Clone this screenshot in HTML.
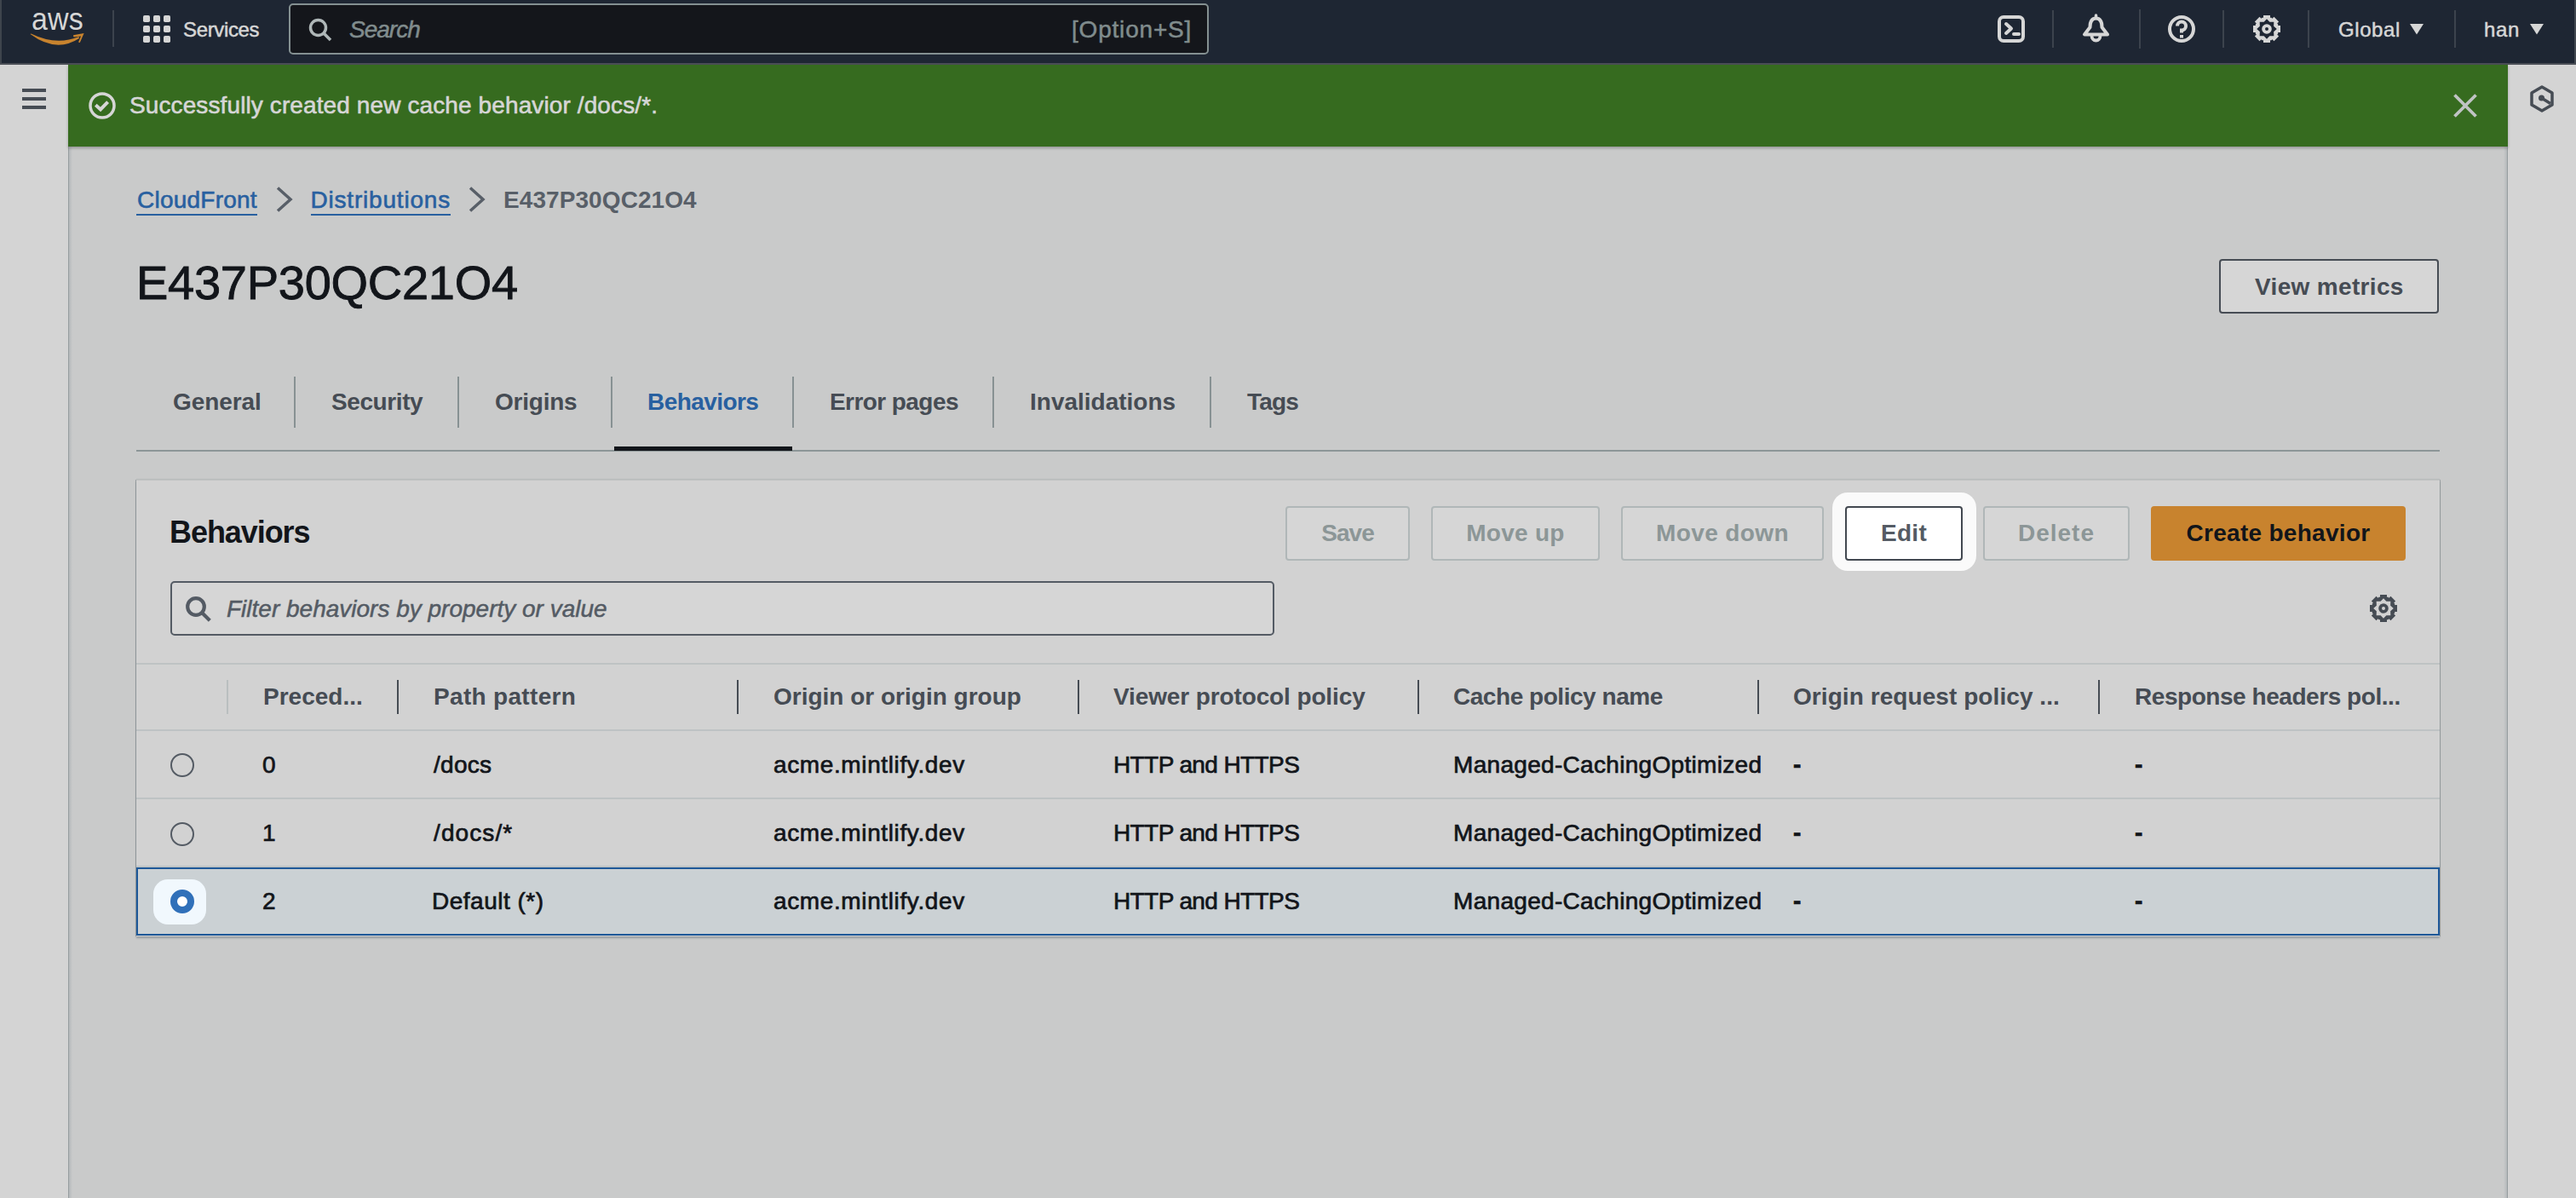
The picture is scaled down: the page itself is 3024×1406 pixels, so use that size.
<!DOCTYPE html>
<html><head><meta charset="utf-8">
<style>
html,body{margin:0;padding:0}html{background:rgb(201,202,202)}
body{width:3024px;height:1406px;overflow:hidden;position:relative;background:rgb(201,202,202);font-family:"Liberation Sans",sans-serif;}
.a{position:absolute;white-space:nowrap;line-height:1}
svg{position:absolute;overflow:visible}
#nav{position:absolute;left:0;top:0;width:3024px;height:74px;background:rgb(30,38,51);border-bottom:2px solid rgb(74,78,86)}
.nt{color:rgb(214,214,214);font-size:24px;-webkit-text-stroke-width:0.5px}
.nd{position:absolute;width:2px;background:rgb(60,67,77)}
#side{position:absolute;left:0;top:76px;width:80px;height:1330px;background:rgb(212,212,212)}
#sideb{position:absolute;left:80px;top:76px;width:5px;height:1330px;background:linear-gradient(to right,rgb(150,157,160) 0,rgb(150,157,160) 1px,rgb(180,184,186) 1px,rgba(201,202,202,0) 5px)}
#rp{position:absolute;left:2944px;top:76px;width:80px;height:1330px;background:rgb(212,212,212)}
#rpb{position:absolute;left:2939px;top:76px;width:5px;height:1330px;background:linear-gradient(to left,rgb(150,157,160) 0,rgb(150,157,160) 1px,rgb(180,184,186) 1px,rgba(201,202,202,0) 5px)}
#flash{position:absolute;left:80px;top:76px;width:2864px;height:96px;background:rgb(54,107,31);box-shadow:0 2px 3px rgba(0,0,0,0.25)}
.ft{color:rgb(214,214,214);font-size:28px;-webkit-text-stroke-width:0.6px}

.tb{top:458px;font-size:28px;font-weight:bold;color:rgb(70,76,84);letter-spacing:-0.4px}
.tdv{position:absolute;top:442px;width:2px;height:60px;background:rgb(135,145,147)}
#cont{position:absolute;left:160px;top:563px;width:2704px;height:535px;background:rgb(210,210,210);box-shadow:0 2px 2px rgba(0,20,30,0.25),1px 0 0 rgb(160,166,168),-1px 0 0 rgb(155,161,164),0 -1px 1px rgba(0,20,30,0.08);border-top:1px solid rgb(192,195,195)}
.btn{position:absolute;top:594px;height:60px;border:2px solid rgb(176,183,184);border-radius:4px;background:rgb(214,214,214);font-size:28px;font-weight:bold;line-height:60px;text-align:center;color:rgb(140,150,151);white-space:nowrap}
.hl{position:absolute;left:160px;width:2704px;height:2px;background:rgb(190,195,196)}
.cdv{position:absolute;top:798px;width:2px;height:40px;background:rgb(70,76,84)}
.th{top:804px;font-size:28px;font-weight:bold;color:rgb(70,76,84)}
.td{font-size:28px;color:rgb(18,21,26);-webkit-text-stroke-width:0.7px}
.radio{position:absolute;left:200px;width:24px;height:24px;border:2px solid rgb(84,91,100);border-radius:50%}
#selrow{position:absolute;left:160px;top:1018px;width:2700px;height:76px;border:2px solid rgb(30,88,152);background:rgb(203,209,212)}
</style></head>
<body>
<div id="nav"><div style="position:absolute;left:0;top:0;width:2px;height:74px;background:rgb(62,68,76)"></div><div style="position:absolute;left:3022px;top:0;width:2px;height:74px;background:rgb(66,72,80)"></div>
  <!-- aws logo -->
  <div class="a" style="left:37px;top:5.5px;font-size:34px;color:rgb(214,214,214);letter-spacing:0.2px;transform:scaleY(1.1);transform-origin:0 29px">aws</div>
  <svg style="left:30px;top:30px" width="75" height="30" viewBox="0 0 75 30"><path d="M5.5 10 Q36 32.5 63 15 L62.5 13 Q36 24 6.5 9.5 Z" fill="rgb(200,131,46)"/><path d="M56 11.3 L68.6 9 L63.8 20 L62 19.6 L65 12.6 L56.4 13.4 Z" fill="rgb(200,131,46)"/></svg>
  <div class="nd" style="left:132px;top:12px;height:43px"></div>
  <!-- grid -->
  <svg style="left:168px;top:18px" width="32" height="32" viewBox="0 0 32 32" fill="rgb(214,214,214)"><rect x="0" y="0" width="8" height="8" rx="1.8"/><rect x="12" y="0" width="8" height="8" rx="1.8"/><rect x="24" y="0" width="8" height="8" rx="1.8"/><rect x="0" y="12" width="8" height="8" rx="1.8"/><rect x="12" y="12" width="8" height="8" rx="1.8"/><rect x="24" y="12" width="8" height="8" rx="1.8"/><rect x="0" y="24" width="8" height="8" rx="1.8"/><rect x="12" y="24" width="8" height="8" rx="1.8"/><rect x="24" y="24" width="8" height="8" rx="1.8"/></svg>
  <div class="a nt" style="left:215px;top:23px;letter-spacing:-0.36px">Services</div>
  <!-- search -->
  <div style="position:absolute;left:339px;top:4px;width:1076px;height:56px;border:2px solid rgb(132,144,145);border-radius:5px;background:rgb(20,22,27)"></div>
  <svg style="left:362px;top:21px" width="28" height="28" viewBox="0 0 28 28"><circle cx="11.5" cy="11.5" r="9" stroke="rgb(175,183,184)" stroke-width="3.5" fill="none"/><path d="M18 18 L26 26" stroke="rgb(175,183,184)" stroke-width="3.5"/></svg>
  <div class="a" style="left:410px;top:21px;font-size:28px;font-style:italic;color:rgb(128,140,141);letter-spacing:-1px;-webkit-text-stroke-width:0.5px">Search</div>
  <div class="a" style="left:1258px;top:21px;font-size:28px;color:rgb(128,140,141);letter-spacing:0.8px;-webkit-text-stroke-width:0.5px">[Option+S]</div>
  <!-- right icons -->
  <svg style="left:2345px;top:18px" width="32" height="32" viewBox="0 0 32 32"><rect x="2" y="2" width="28" height="28" rx="5" stroke="rgb(214,214,214)" stroke-width="4" fill="none"/><path d="M10 10 L16 15.5 L10 21" stroke="rgb(214,214,214)" stroke-width="4" fill="none" stroke-linecap="round" stroke-linejoin="round"/><path d="M19 22 L25 22" stroke="rgb(214,214,214)" stroke-width="4" stroke-linecap="round"/></svg>
  <div class="nd" style="left:2409px;top:12px;height:44px"></div>
  <svg style="left:2444px;top:17px" width="34" height="34" viewBox="0 0 34 34"><path d="M16.5 1 L16.5 4" stroke="rgb(214,214,214)" stroke-width="3.5" stroke-linecap="round"/><path d="M16.5 4.5 C10.5 4.5 9.5 10 9.5 15 L3 23.5 L30 23.5 L23.5 15 C23.5 10 22.5 4.5 16.5 4.5 Z" stroke="rgb(214,214,214)" stroke-width="4" fill="none" stroke-linejoin="round"/><path d="M11.5 25 A5 5.5 0 0 0 21.5 25" stroke="rgb(214,214,214)" stroke-width="3.8" fill="none"/></svg>
  <div class="nd" style="left:2511px;top:11px;height:46px"></div>
  <svg style="left:2545px;top:18px" width="32" height="32" viewBox="0 0 32 32"><circle cx="16" cy="16" r="14" stroke="rgb(214,214,214)" stroke-width="4" fill="none"/><path d="M11 12.5 A5 5 0 1 1 16 17.5 L16 20.5" stroke="rgb(214,214,214)" stroke-width="4" fill="none"/><rect x="14" y="23" width="4" height="3.5" fill="rgb(214,214,214)"/></svg>
  <div class="nd" style="left:2609px;top:12px;height:44px"></div>
  <svg style="left:2645px;top:18px" width="32" height="32" viewBox="0 0 32 32"><path d="M10.53 2.80 L12.00 2.80 L12.00 0.00 L20.00 0.00 L20.00 2.80 L21.47 2.80 L21.47 2.80 L22.51 3.84 L24.49 1.86 L30.14 7.51 L28.16 9.49 L29.20 10.53 L29.20 10.53 L29.20 12.00 L32.00 12.00 L32.00 20.00 L29.20 20.00 L29.20 21.47 L29.20 21.47 L28.16 22.51 L30.14 24.49 L24.49 30.14 L22.51 28.16 L21.47 29.20 L21.47 29.20 L20.00 29.20 L20.00 32.00 L12.00 32.00 L12.00 29.20 L10.53 29.20 L10.53 29.20 L9.49 28.16 L7.51 30.14 L1.86 24.49 L3.84 22.51 L2.80 21.47 L2.80 21.47 L2.80 20.00 L0.00 20.00 L-0.00 12.00 L2.80 12.00 L2.80 10.53 L2.80 10.53 L3.84 9.49 L1.86 7.51 L7.51 1.86 L9.49 3.84 L10.53 2.80 Z M16.00 4.20 L19.37 7.87 L24.34 7.66 L24.13 12.63 L27.80 16.00 L24.13 19.37 L24.34 24.34 L19.37 24.13 L16.00 27.80 L12.63 24.13 L7.66 24.34 L7.87 19.37 L4.20 16.00 L7.87 12.63 L7.66 7.66 L12.63 7.87 Z" fill="rgb(214,214,214)" fill-rule="evenodd"/><circle cx="16" cy="16" r="3.9" stroke="rgb(214,214,214)" stroke-width="3.8" fill="none"/></svg>
  <div class="nd" style="left:2709px;top:12px;height:44px"></div>
  <div class="a nt" style="left:2745px;top:23px;letter-spacing:0.58px">Global</div>
  <svg style="left:2829px;top:28px" width="16" height="13" viewBox="0 0 16 13"><path d="M0 0 H16 L8 12.5 Z" fill="rgb(214,214,214)"/></svg>
  <div class="nd" style="left:2881px;top:12px;height:44px"></div>
  <div class="a nt" style="left:2916px;top:23px;letter-spacing:0.6px">han</div>
  <svg style="left:2970px;top:28px" width="16" height="13" viewBox="0 0 16 13"><path d="M0 0 H16 L8 12.5 Z" fill="rgb(214,214,214)"/></svg>
</div>

<div id="side"></div>
<div id="sideb"></div>
<svg style="left:26px;top:104px" width="28" height="24" viewBox="0 0 28 24" fill="rgb(70,76,84)"><rect x="0" y="0" width="28" height="4"/><rect x="0" y="10" width="28" height="4"/><rect x="0" y="20" width="28" height="4"/></svg>
<div id="rp"></div>
<div id="rpb"></div>
<svg style="left:2969px;top:100px" width="30" height="32" viewBox="0 0 30 32"><path d="M15 2 L27 9 L27 23 L15 30 L3 23 L3 9 Z" stroke="rgb(70,76,84)" stroke-width="3.5" fill="none" stroke-linejoin="round"/><circle cx="14.5" cy="15" r="3.5" fill="rgb(70,76,84)"/><path d="M14.5 15 L25 21.5" stroke="rgb(70,76,84)" stroke-width="3.5"/></svg>

<div id="flash">
  <svg style="left:24px;top:32px" width="32" height="32" viewBox="0 0 32 32"><circle cx="16" cy="16" r="14" stroke="rgb(214,214,214)" stroke-width="3.5" fill="none"/><path d="M8.3 15.3 L14 20.4 L22.6 11.7" stroke="rgb(214,214,214)" stroke-width="4" fill="none"/></svg>
  <div class="a ft" style="left:72px;top:34px;letter-spacing:0.11px">Successfully created new cache behavior /docs/*.</div>
  <svg style="left:2801px;top:35px" width="26" height="26" viewBox="0 0 26 26"><path d="M0.5 0.5 L25.5 25.5 M25.5 0.5 L0.5 25.5" stroke="rgb(192,195,196)" stroke-width="3.8"/></svg>
</div>


<!-- breadcrumbs -->
<div class="a" style="left:161px;top:220.6px;font-size:28px;color:rgb(40,96,160);letter-spacing:0.23px;-webkit-text-stroke-width:0.6px">CloudFront</div>
<div style="position:absolute;left:160px;top:251px;width:142px;height:2px;background:rgb(40,96,160)"></div>
<svg style="left:324px;top:219px" width="20" height="30" viewBox="0 0 20 30"><path d="M2 1.5 L17 15 L2 28.5" stroke="rgb(88,95,104)" stroke-width="3.5" fill="none"/></svg>
<div class="a" style="left:364.5px;top:220.6px;font-size:28px;color:rgb(40,96,160);letter-spacing:0.8px;-webkit-text-stroke-width:0.6px">Distributions</div>
<div style="position:absolute;left:365px;top:251px;width:164px;height:2px;background:rgb(40,96,160)"></div>
<svg style="left:550px;top:219px" width="20" height="30" viewBox="0 0 20 30"><path d="M2 1.5 L17 15 L2 28.5" stroke="rgb(88,95,104)" stroke-width="3.5" fill="none"/></svg>
<div class="a" style="left:591px;top:220.6px;font-size:28px;font-weight:bold;color:rgb(88,95,104);letter-spacing:0.08px">E437P30QC21O4</div>

<!-- heading -->
<div class="a" style="left:160px;top:304px;font-size:56px;color:rgb(18,21,26);letter-spacing:-0.27px;-webkit-text-stroke:0.9px rgb(18,21,26)">E437P30QC21O4</div>

<!-- view metrics -->
<div style="position:absolute;left:2605px;top:304px;width:254px;height:60px;border:2px solid rgb(70,76,84);border-radius:4px;background:rgb(214,214,214)"></div>
<div class="a" style="left:2647px;top:322.8px;font-size:28px;font-weight:bold;color:rgb(70,76,84);letter-spacing:0.34px">View metrics</div>

<!-- tabs -->
<div style="position:absolute;left:160px;top:528px;width:2704px;height:2px;background:rgb(140,150,151)"></div>
<div style="position:absolute;left:721px;top:524px;width:209px;height:5px;background:rgb(18,21,26)"></div>
<div class="a tb" style="left:203px;letter-spacing:-0.08px">General</div>
<div class="tdv" style="left:345px"></div>
<div class="a tb" style="left:389px">Security</div>
<div class="tdv" style="left:537px"></div>
<div class="a tb" style="left:581px;letter-spacing:-0.23px">Origins</div>
<div class="tdv" style="left:717px"></div>
<div class="a tb" style="left:760px;color:rgb(40,96,160);letter-spacing:-0.56px">Behaviors</div>
<div class="tdv" style="left:930px"></div>
<div class="a tb" style="left:974px;letter-spacing:-0.57px">Error pages</div>
<div class="tdv" style="left:1165px"></div>
<div class="a tb" style="left:1209px;letter-spacing:0px">Invalidations</div>
<div class="tdv" style="left:1420px"></div>
<div class="a tb" style="left:1464px;letter-spacing:-0.83px">Tags</div>

<!-- container -->
<div id="cont"></div>
<div class="a" style="left:199px;top:606.5px;font-size:36px;font-weight:bold;color:rgb(18,21,26);letter-spacing:-1.07px">Behaviors</div>

<div class="btn dis" style="left:1509px;width:142px;letter-spacing:-0.97px">Save</div>
<div class="btn dis" style="left:1680px;width:194px;letter-spacing:0.28px">Move up</div>
<div class="btn dis" style="left:1903px;width:234px;letter-spacing:0.4px">Move down</div>
<div style="position:absolute;left:2151px;top:578px;width:169px;height:92px;border-radius:18px;background:rgb(250,250,250)"></div>
<div class="btn" style="left:2166px;width:134px;background:#fff;border-color:rgb(66,72,80);color:rgb(84,91,100);letter-spacing:0.33px">Edit</div>
<div class="btn dis" style="left:2328px;width:168px;letter-spacing:0.98px">Delete</div>
<div class="btn" style="left:2525px;width:299px;height:64px;top:594px;border:none;line-height:64px;background:rgb(200,131,46);color:rgb(18,21,26);letter-spacing:0.29px">Create behavior</div>

<!-- filter -->
<div style="position:absolute;left:200px;top:682px;width:1292px;height:60px;border:2px solid rgb(84,91,100);border-radius:5px;background:rgb(214,214,214)"></div>
<svg style="left:217px;top:700px" width="32" height="32" viewBox="0 0 32 32"><circle cx="13" cy="12" r="9.8" stroke="rgb(84,91,100)" stroke-width="4.2" fill="none"/><path d="M20 19 L29.3 28.3" stroke="rgb(84,91,100)" stroke-width="4.2"/></svg>
<div class="a" style="left:266px;top:701px;font-size:28px;font-style:italic;color:rgb(84,91,100);-webkit-text-stroke-width:0.5px">Filter behaviors by property or value</div>
<svg style="left:2782px;top:698px" width="32" height="32" viewBox="0 0 32 32"><path d="M10.53 2.80 L12.00 2.80 L12.00 0.00 L20.00 0.00 L20.00 2.80 L21.47 2.80 L21.47 2.80 L22.51 3.84 L24.49 1.86 L30.14 7.51 L28.16 9.49 L29.20 10.53 L29.20 10.53 L29.20 12.00 L32.00 12.00 L32.00 20.00 L29.20 20.00 L29.20 21.47 L29.20 21.47 L28.16 22.51 L30.14 24.49 L24.49 30.14 L22.51 28.16 L21.47 29.20 L21.47 29.20 L20.00 29.20 L20.00 32.00 L12.00 32.00 L12.00 29.20 L10.53 29.20 L10.53 29.20 L9.49 28.16 L7.51 30.14 L1.86 24.49 L3.84 22.51 L2.80 21.47 L2.80 21.47 L2.80 20.00 L0.00 20.00 L-0.00 12.00 L2.80 12.00 L2.80 10.53 L2.80 10.53 L3.84 9.49 L1.86 7.51 L7.51 1.86 L9.49 3.84 L10.53 2.80 Z M16.00 4.20 L19.37 7.87 L24.34 7.66 L24.13 12.63 L27.80 16.00 L24.13 19.37 L24.34 24.34 L19.37 24.13 L16.00 27.80 L12.63 24.13 L7.66 24.34 L7.87 19.37 L4.20 16.00 L7.87 12.63 L7.66 7.66 L12.63 7.87 Z" fill="rgb(70,76,84)" fill-rule="evenodd"/><circle cx="16" cy="16" r="3.9" stroke="rgb(70,76,84)" stroke-width="3.8" fill="none"/></svg>

<!-- table -->
<div class="hl" style="top:778px"></div>
<div class="hl" style="top:856px"></div>
<div class="hl" style="top:936px"></div>
<div class="hl" style="top:1016px"></div>
<div style="position:absolute;left:266px;top:798px;width:2px;height:40px;background:rgb(186,191,192)"></div>
<div class="cdv" style="left:466px"></div>
<div class="cdv" style="left:865px"></div>
<div class="cdv" style="left:1265px"></div>
<div class="cdv" style="left:1664px"></div>
<div class="cdv" style="left:2063px"></div>
<div class="cdv" style="left:2463px"></div>
<div class="a th" style="left:309px">Preced...</div>
<div class="a th" style="left:509px;letter-spacing:0.32px">Path pattern</div>
<div class="a th" style="left:908px">Origin or origin group</div>
<div class="a th" style="left:1307px;letter-spacing:-0.12px">Viewer protocol policy</div>
<div class="a th" style="left:1706px;letter-spacing:-0.46px">Cache policy name</div>
<div class="a th" style="left:2105px;letter-spacing:0.07px">Origin request policy ...</div>
<div class="a th" style="left:2506px;letter-spacing:-0.45px">Response headers pol...</div>

<div id="selrow"></div>
<div class="radio" style="top:884px"></div>
<div class="radio" style="top:965px"></div>
<div style="position:absolute;left:180px;top:1032px;width:62px;height:53px;border-radius:17px;background:rgb(241,248,253)"></div>
<svg style="left:200px;top:1044px" width="28" height="28" viewBox="0 0 28 28"><circle cx="14" cy="14" r="10" stroke="rgb(48,112,185)" stroke-width="8" fill="#fff"/></svg>

<div class="a td" style="left:308px;top:884.1px">0</div>
<div class="a td" style="left:509px;top:884.1px;letter-spacing:0.3px">/docs</div>
<div class="a td" style="left:908px;top:884.1px;letter-spacing:0.625px">acme.mintlify.dev</div>
<div class="a td" style="left:1307px;top:884.1px;letter-spacing:-0.6px">HTTP and HTTPS</div>
<div class="a td" style="left:1706px;top:884.1px;letter-spacing:0.31px">Managed-CachingOptimized</div>
<div class="a td" style="left:2105px;top:884.1px;font-weight:bold">-</div>
<div class="a td" style="left:2506px;top:884.1px;font-weight:bold">-</div>

<div class="a td" style="left:308px;top:964.1px">1</div>
<div class="a td" style="left:509px;top:964.1px;letter-spacing:1.1px">/docs/*</div>
<div class="a td" style="left:908px;top:964.1px;letter-spacing:0.625px">acme.mintlify.dev</div>
<div class="a td" style="left:1307px;top:964.1px;letter-spacing:-0.6px">HTTP and HTTPS</div>
<div class="a td" style="left:1706px;top:964.1px;letter-spacing:0.31px">Managed-CachingOptimized</div>
<div class="a td" style="left:2105px;top:964.1px;font-weight:bold">-</div>
<div class="a td" style="left:2506px;top:964.1px;font-weight:bold">-</div>

<div class="a td" style="left:308px;top:1044.4px">2</div>
<div class="a td" style="left:507px;top:1044.4px;letter-spacing:0.5px">Default (*)</div>
<div class="a td" style="left:908px;top:1044.4px;letter-spacing:0.625px">acme.mintlify.dev</div>
<div class="a td" style="left:1307px;top:1044.4px;letter-spacing:-0.6px">HTTP and HTTPS</div>
<div class="a td" style="left:1706px;top:1044.4px;letter-spacing:0.31px">Managed-CachingOptimized</div>
<div class="a td" style="left:2105px;top:1044.4px;font-weight:bold">-</div>
<div class="a td" style="left:2506px;top:1044.4px;font-weight:bold">-</div>

</body></html>
